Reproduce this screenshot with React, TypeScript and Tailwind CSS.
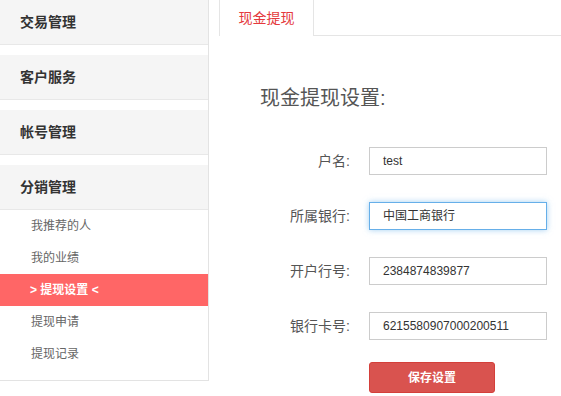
import React from "react";

const font = { fontFamily: '"Liberation Sans", "Noto Sans CJK SC", sans-serif' };

const groups = ["交易管理", "客户服务", "帐号管理", "分销管理"];

const subItems = [
  { label: "我推荐的人", active: false },
  { label: "我的业绩", active: false },
  { label: "> 提现设置 <", active: true },
  { label: "提现申请", active: false },
  { label: "提现记录", active: false },
];

const fields = [
  { label: "户名:", value: "test", focus: false },
  { label: "所属银行:", value: "中国工商银行", focus: true },
  { label: "开户行号:", value: "2384874839877", focus: false },
  { label: "银行卡号:", value: "6215580907000200511", focus: false },
];

function Sidebar() {
  return (
    <div className="w-[209px] shrink-0 self-start border-r border-b border-[#e3e3e3] bg-white">
      {groups.map((g, i) => (
        <div key={g} className={i > 0 ? "mt-[10px]" : ""}>
          <div className="box-border flex h-[45px] items-center border-b border-[#e8e8e8] bg-[#f5f5f5] pl-[20px] text-[14px] font-bold text-[#333]">
            {g}
          </div>
        </div>
      ))}
      <div className="pb-[10px]">
        {subItems.map((item) => (
          <div
            key={item.label}
            className={
              item.active
                ? "flex h-[32px] items-center bg-[#ff6666] pl-[30px] text-[12px] font-bold text-white"
                : "flex h-[32px] items-center pl-[31px] text-[12px] text-[#666]"
            }
          >
            {item.label}
          </div>
        ))}
      </div>
    </div>
  );
}

function CashForm() {
  return (
    <div className="flex-1">
      <div className="flex h-[36px] pl-[10px]">
        <div className="box-border flex w-[95px] items-center justify-center border-l border-r border-[#e5e5e5] bg-white text-[14px] text-[#e4393c]">
          现金提现
        </div>
        <div className="flex-1 border-b border-[#e5e5e5]" />
      </div>
      <div className="mt-[48px] pl-[51px] text-[20px] leading-[28px] text-[#555]">现金提现设置:</div>
      <div className="mt-[35px]">
        {fields.map((f, i) => (
          <div key={f.label} className={"flex items-center " + (i > 0 ? "mt-[27px]" : "")}>
            <div className="w-[141px] text-right text-[14px] text-[#555]">{f.label}</div>
            <div
              className={
                f.focus
                  ? "ml-[19px] box-border flex h-[28px] w-[178px] items-center border border-[#66afe9] pl-[13px] text-[12px] text-[#333] shadow-[0_0_6px_rgba(102,175,233,0.6)]"
                  : "ml-[19px] box-border flex h-[28px] w-[178px] items-center border border-[#cccccc] pl-[13px] text-[12px] text-[#333]"
              }
            >
              {f.value}
            </div>
          </div>
        ))}
        <div className="mt-[22px] pl-[160px]">
          <button className="box-border h-[31px] w-[126px] rounded-[3px] border border-[#d43f3a] bg-[#d9534f] text-[12px] font-bold text-white">
            保存设置
          </button>
        </div>
      </div>
    </div>
  );
}

export default function App() {
  return (
    <div className="flex h-[396px] w-[561px] overflow-hidden bg-white" style={font}>
      <Sidebar />
      <CashForm />
    </div>
  );
}
